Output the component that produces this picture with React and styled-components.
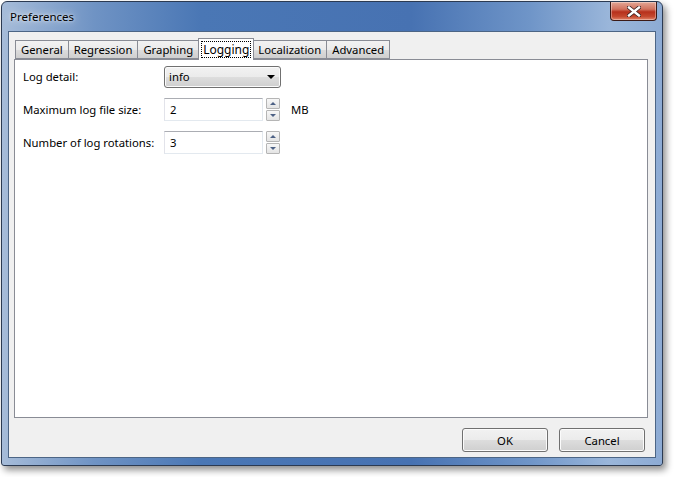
import styled, { createGlobalStyle } from "styled-components";

const GlobalStyle = createGlobalStyle`
    html, body {
        margin: 0;
        padding: 0;
        background: #ffffff;
    }
    body {
        font-family: "Noto Sans", "Liberation Sans", sans-serif;
        font-size: 11.3px;
        color: #000;
    }
`;

const Page = styled.div`
    width: 674px;
    height: 477px;
    padding: 1px 0 0 1px;
    box-sizing: border-box;
`;

const Window = styled.div`
    width: 662px;
    height: 465px;
    box-sizing: border-box;
    display: flex;
    flex-direction: column;
    border: 1px solid #2b3a52;
    border-radius: 6px 6px 3px 3px;
    padding: 0 6px 7px 6px;
    background: linear-gradient(90deg, #a6bcd9 0%, #6f93c4 14%, #4a77b5 30%, #4772b2 62%, #6f95c8 80%, #9ab6da 92%, #8dabd4 100%);
    box-shadow: 3px 4px 7px rgba(0, 0, 0, 0.45);
`;

const TitleBar = styled.div`
    height: 29px;
    display: flex;
    justify-content: space-between;
    align-items: flex-start;
`;

const Title = styled.div`
    padding: 7px 0 0 2px;
    font-size: 11.5px;
    color: #000;
    text-shadow: 0 0 8px rgba(255, 255, 255, 0.9), 0 0 3px rgba(255, 255, 255, 0.8);
`;

const CloseButton = styled.div`
    width: 45px;
    height: 18px;
    margin-right: -1px;
    border: 1px solid #3b1a16;
    border-top: none;
    border-radius: 0 0 4px 4px;
    background: linear-gradient(180deg, #e3a796 0%, #d2725e 40%, #b7301c 55%, #c4482e 80%, #e2836a 100%);
    display: flex;
    align-items: center;
    justify-content: center;
    box-shadow: inset 0 0 0 1px rgba(255, 255, 255, 0.35);
`;

const Client = styled.div`
    flex: 1;
    display: flex;
    flex-direction: column;
    background: #f0f0f0;
    border: 1px solid #4c6585;
    padding: 6px 7px 5px 5px;
`;

const TabRow = styled.div`
    display: flex;
    align-items: flex-end;
    height: 21px;
    padding-left: 1px;
    position: relative;
    z-index: 1;
`;

const Tab = styled.div`
    box-sizing: border-box;
    height: ${(p) => (p.$active ? "22px" : "19px")};
    margin: ${(p) => (p.$active ? "0 -1px -1px -1px" : "0")};
    padding: ${(p) => (p.$active ? "0 2px 1px 2px" : "0 3px 0 3px")};
    border: 1px solid #898c95;
    border-bottom: ${(p) => (p.$active ? "none" : "1px solid #898c95")};
    border-left: ${(p) => (p.$first || p.$active ? "1px solid #898c95" : "none")};
    background: ${(p) =>
        p.$active ? "#ffffff" : "linear-gradient(180deg, #f2f2f2 0%, #ebebeb 50%, #dddddd 51%, #cfcfcf 100%)"};
    display: flex;
    align-items: center;
    white-space: nowrap;
    position: relative;
    z-index: ${(p) => (p.$active ? 2 : 1)};
`;

const TabLabel = styled.span`
    padding: 0 1px;
    border: 1px dotted ${(p) => (p.$focused ? "#000" : "transparent")};
    line-height: 15px;
    font-size: ${(p) => (p.$focused ? "12px" : "11.3px")};
`;

const Pane = styled.div`
    flex: 1;
    background: #ffffff;
    border: 1px solid #898c95;
    padding: 5px 8px;
    display: flex;
    flex-direction: column;
    gap: 10px;
`;

const FieldRow = styled.div`
    display: flex;
    align-items: center;
    height: 23px;
`;

const Label = styled.div`
    width: 141px;
`;

const Combo = styled.div`
    box-sizing: border-box;
    width: 117px;
    height: 22px;
    border: 1px solid #707070;
    border-radius: 3px;
    background: linear-gradient(180deg, #f2f2f2 0%, #ebebeb 50%, #dddddd 51%, #cfcfcf 100%);
    display: flex;
    align-items: center;
    justify-content: space-between;
    padding: 0 5px 0 4px;
    box-shadow: inset 0 0 0 1px #fbfbfb;
`;

const Arrow = styled.span`
    width: 0;
    height: 0;
    border-left: 4px solid transparent;
    border-right: 4px solid transparent;
    border-top: 4px solid #000;
`;

const TextInput = styled.div`
    box-sizing: border-box;
    width: 99px;
    height: 23px;
    border: 1px solid #e3e9ef;
    border-top-color: #abadb3;
    border-left-color: #e2e3ea;
    background: #fff;
    display: flex;
    align-items: center;
    padding-left: 5px;
`;

const Spinner = styled.div`
    display: flex;
    flex-direction: column;
    gap: 1px;
    margin-left: 3px;
`;

const SpinButton = styled.div`
    box-sizing: border-box;
    width: 14px;
    height: 11px;
    border: 1px solid #b5b5b5;
    border-radius: 1px;
    background: linear-gradient(180deg, #f7f7f7 0%, #e4e4e4 100%);
    display: flex;
    align-items: center;
    justify-content: center;
`;

const SpinArrow = styled.span`
    width: 0;
    height: 0;
    border-left: 3px solid transparent;
    border-right: 3px solid transparent;
    border-bottom: ${(p) => (p.$down ? "none" : "3px solid #4d6185")};
    border-top: ${(p) => (p.$down ? "3px solid #4d6185" : "none")};
`;

const Unit = styled.div`
    margin-left: 11px;
`;

const ButtonBar = styled.div`
    display: flex;
    justify-content: flex-end;
    gap: 11px;
    padding: 10px 3px 0 0;
`;

const Button = styled.div`
    box-sizing: border-box;
    width: 86px;
    height: 24px;
    border: 1px solid #707070;
    border-radius: 3px;
    background: linear-gradient(180deg, #f2f2f2 0%, #ebebeb 50%, #dddddd 51%, #cfcfcf 100%);
    box-shadow: inset 0 0 0 1px #fbfbfb;
    display: flex;
    align-items: center;
    justify-content: center;
`;

const tabs = ["General", "Regression", "Graphing", "Logging", "Localization", "Advanced"];

const Spin = () => (
    <Spinner>
        <SpinButton>
            <SpinArrow />
        </SpinButton>
        <SpinButton>
            <SpinArrow $down />
        </SpinButton>
    </Spinner>
);

export default function App() {
    return (
        <Page>
            <GlobalStyle />
            <Window>
                <TitleBar>
                    <Title>Preferences</Title>
                    <CloseButton>
                        <svg width="14" height="11" viewBox="0 0 14 11">
                            <path
                                d="M2 1.5 L12 9.5 M12 1.5 L2 9.5"
                                stroke="#3a2020"
                                strokeWidth="4"
                                strokeLinecap="square"
                            />
                            <path
                                d="M2 1.5 L12 9.5 M12 1.5 L2 9.5"
                                stroke="#ffffff"
                                strokeWidth="2.4"
                                strokeLinecap="square"
                            />
                        </svg>
                    </CloseButton>
                </TitleBar>
                <Client>
                    <TabRow>
                        {tabs.map((t, i) => (
                            <Tab key={t} $first={i === 0} $active={t === "Logging"}>
                                <TabLabel $focused={t === "Logging"}>{t}</TabLabel>
                            </Tab>
                        ))}
                    </TabRow>
                    <Pane>
                        <FieldRow>
                            <Label>Log detail:</Label>
                            <Combo>
                                <span>info</span>
                                <Arrow />
                            </Combo>
                        </FieldRow>
                        <FieldRow>
                            <Label>Maximum log file size:</Label>
                            <TextInput>2</TextInput>
                            <Spin />
                            <Unit>MB</Unit>
                        </FieldRow>
                        <FieldRow>
                            <Label>Number of log rotations:</Label>
                            <TextInput>3</TextInput>
                            <Spin />
                        </FieldRow>
                    </Pane>
                    <ButtonBar>
                        <Button>OK</Button>
                        <Button>Cancel</Button>
                    </ButtonBar>
                </Client>
            </Window>
        </Page>
    );
}
